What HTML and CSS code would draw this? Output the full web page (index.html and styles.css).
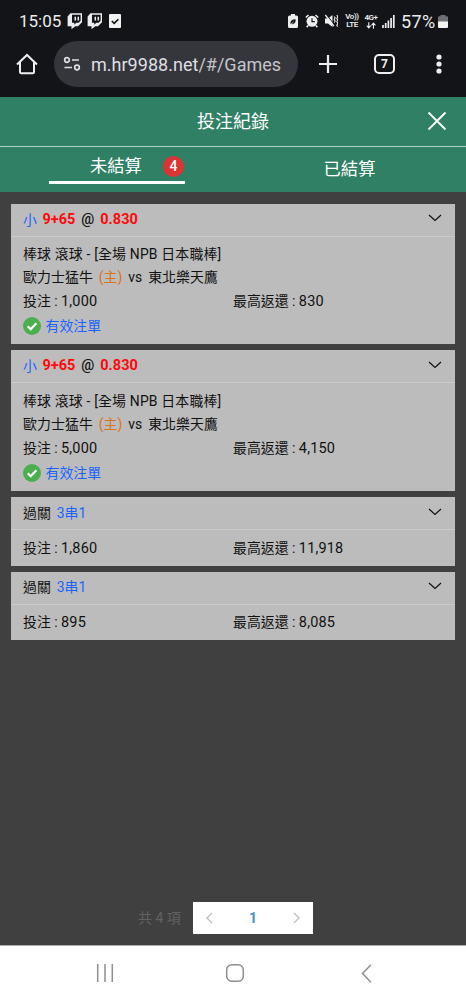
FILE: index.html
```html
<!DOCTYPE html>
<html lang="zh-Hant">
<head>
<meta charset="utf-8">
<title>投注紀錄</title>
<link rel="stylesheet" href="styles.css">
</head>
<body>
<svg width="0" height="0" class="defs">
  <symbol id="twitch" viewBox="0 0 16 16">
    <path fill="#ececee" fill-rule="evenodd" d="M3.500 .3H15v9L11 13.300H8.300L4.500 16.200v-2.900H.6V3.500zM5 1.700v8h2.300v2l2-2h2.400l1.900-1.900V1.700z"/>
    <path stroke="#ececee" stroke-width="1.500" d="M8.300 3.700v3.800M11.300 3.700v3.800"/>
  </symbol>
  <symbol id="chevron" viewBox="0 0 14 8">
    <path d="M1 1l6 5.500L13 1" fill="none" stroke="#111" stroke-width="1.200"/>
  </symbol>
  <symbol id="valid" viewBox="0 0 18 18">
    <circle cx="9" cy="9" r="9" fill="#4baf50"/>
    <path d="M4.700 9.300l3 2.900 5.700-6" fill="none" stroke="#fff" stroke-width="2.200"/>
  </symbol>
</svg>
<div class="screen">
  <div class="status">
    <span class="clock">15:05</span>
    <svg class="tw" width="16" height="16"><use href="#twitch"/></svg>
    <svg class="tw second" width="16" height="16"><use href="#twitch"/></svg>
    <svg class="task" width="12" height="14" viewBox="0 0 12 14"><rect width="12" height="14" rx="1" fill="#f2f2f3"/><path d="M2.800 7l2.400 2.400 4.200-4.200" fill="none" stroke="#121418" stroke-width="1.600"/></svg>
    <div class="status-right">
      <svg width="10" height="14" viewBox="0 0 10 14"><path fill="#eee" d="M3 0h4v1.500h1.500Q10 1.500 10 3v9.500Q10 14 8.500 14h-7Q0 14 0 12.500V3q0-1.500 1.500-1.500H3z"/><path d="M2.300 10.500C1.500 6.500 4 5 8 5c0 4-1.500 5.800-4.500 5zM2 11.200l3.500-3.400" fill="#17191d" stroke="#eee" stroke-width=".6"/></svg>
      <svg class="alarm" width="14" height="14" viewBox="0 0 14 14"><path d="M.8 3.500L3.500 1M13.200 3.500L10.500 1M3 11.500l-1.300 1.700M11 11.500l1.300 1.700" stroke="#eee" stroke-width="1.600"/><circle cx="7" cy="7.300" r="5.500" fill="#eee"/><path d="M7 4.200v3.500h2.800" fill="none" stroke="#17191d" stroke-width="1.200"/></svg>
      <svg class="mute" width="13" height="14" viewBox="0 0 13 14"><path fill="#eee" d="M0 4.500h3L7.500 1v12L3 9.500H0z"/><path d="M1.500 .7l8.500 10.600" stroke="#121418" stroke-width="1"/><path d="M.3 1l8.700 11.200" stroke="#eee" stroke-width="1.300"/><path d="M9.200 2.500l1 1.500-1 1.500 1 1.500-1 1.500M11.800 1l1 1.700-1 1.700 1 1.700-1 1.700 1 1.700-1 1.700 1 1.500" fill="none" stroke="#eee" stroke-width="1.100"/></svg>
      <span class="tiny volte"><span>Vo))</span><span>LTE</span></span>
      <span class="tiny fourg"><span>4G+</span><svg width="10" height="7" viewBox="0 0 9 6"><path d="M2.500 0v5M.7 3.200l1.800 2 1.800-2M6.700 6V1M4.900 2.800l1.800-2 1.800 2" fill="none" stroke="#eee"/></svg></span>
      <svg class="signal" width="13" height="13" viewBox="0 0 13 13"><path d="M1 13v-3M3.700 13V8M6.400 13V5.500M9.100 13V3M11.800 13V0" stroke="#eee" stroke-width="1.700"/></svg>
      <span class="percent">57%</span>
      <svg class="battery" width="10" height="13" viewBox="0 0 10 13"><path fill="#6f7073" d="M2.500 0h5v1.300H9q1 0 1 1V7H0V2.300q0-1 1-1h1.500z"/><path fill="#f2f2f2" d="M0 6.500h10V12q0 1-1 1H1q-1 0-1-1z"/></svg>
    </div>
  </div>

  <div class="browser">
    <svg class="home" width="22" height="22" viewBox="0 0 22 22"><path d="M4 9.500V19q0 1.200 1.200 1.200h11.600Q18 20.200 18 19V9.500M1 11.500L11 2l10 9.500" fill="none" stroke="#eeeef1" stroke-width="2"/></svg>
    <div class="address">
      <svg width="18" height="16" viewBox="0 0 18 16"><g fill="none" stroke="#dedee2" stroke-width="1.700"><circle cx="4" cy="4" r="2.300"/><path d="M9 4h7M1.500 11.500H9"/><circle cx="14" cy="11.500" r="2.300"/></g></svg>
      <span class="url">m.hr9988.net<span>/#/Games</span></span>
    </div>
    <svg class="plus" width="18" height="18" viewBox="0 0 18 18"><path d="M9 0v18M0 9h18" stroke="#eeeef1" stroke-width="2.200"/></svg>
    <div class="tabcount">7</div>
    <svg class="more" width="6" height="20" viewBox="0 0 6 20"><g fill="#eeeef1"><circle cx="3" cy="3" r="2.600"/><circle cx="3" cy="10" r="2.600"/><circle cx="3" cy="17" r="2.600"/></g></svg>
  </div>

  <header class="title">
    <h1>投注紀錄</h1>
    <svg width="20" height="20" viewBox="0 0 20 20"><path d="M1.500 1.500l17 17M18.500 1.500l-17 17" stroke="#fff" stroke-width="1.800"/></svg>
  </header>
  <nav class="tabs">
    <div class="tab active"><span>未結算</span><b class="badge">4</b></div>
    <div class="tab"><span>已結算</span></div>
  </nav>

  <main class="records">
    <article class="card">
      <div class="head"><p class="pick"><span>小</span><b>9+65</b><i>@</i><b>0.830</b></p><svg width="14" height="8"><use href="#chevron"/></svg></div>
      <div class="body">
        <p class="league">棒球 滾球 - [全場 NPB 日本職棒]</p>
        <p class="teams">歐力士猛牛 <em>(主)</em> vs 東北樂天鷹</p>
        <div class="stake"><span>投注 : <i>1,000</i></span><span>最高返還 : <i>830</i></span></div>
        <p class="state"><svg width="18" height="18"><use href="#valid"/></svg>有效注單</p>
      </div>
    </article>
    <article class="card">
      <div class="head"><p class="pick"><span>小</span><b>9+65</b><i>@</i><b>0.830</b></p><svg width="14" height="8"><use href="#chevron"/></svg></div>
      <div class="body">
        <p class="league">棒球 滾球 - [全場 NPB 日本職棒]</p>
        <p class="teams">歐力士猛牛 <em>(主)</em> vs 東北樂天鷹</p>
        <div class="stake"><span>投注 : <i>5,000</i></span><span>最高返還 : <i>4,150</i></span></div>
        <p class="state"><svg width="18" height="18"><use href="#valid"/></svg>有效注單</p>
      </div>
    </article>
    <article class="card parlay">
      <div class="head"><p class="pick">過關<span>3串1</span></p><svg width="14" height="8"><use href="#chevron"/></svg></div>
      <div class="body"><div class="stake"><span>投注 : <i>1,860</i></span><span>最高返還 : <i>11,918</i></span></div></div>
    </article>
    <article class="card parlay">
      <div class="head"><p class="pick">過關<span>3串1</span></p><svg width="14" height="8"><use href="#chevron"/></svg></div>
      <div class="body"><div class="stake"><span>投注 : <i>895</i></span><span>最高返還 : <i>8,085</i></span></div></div>
    </article>
  </main>

  <footer class="pager">
    <span class="total">共 4 項</span>
    <div class="pages">
      <svg width="7" height="12" viewBox="0 0 7 12"><path d="M6 1L1 6l5 5" fill="none" stroke="#bdbdbd" stroke-width="1.300"/></svg>
      <b>1</b>
      <svg width="7" height="12" viewBox="0 0 7 12"><path d="M1 1l5 5-5 5" fill="none" stroke="#bdbdbd" stroke-width="1.300"/></svg>
    </div>
  </footer>
  <div class="system">
    <svg width="18" height="18" viewBox="0 0 18 18"><path d="M1.700 0v18M9 0v18M16.300 0v18" stroke="#8e8e8e" stroke-width="1.500"/></svg>
    <svg class="homekey" width="20" height="20" viewBox="0 0 20 20"><rect x="1.700" y="1.700" width="16.600" height="16.600" rx="5" fill="none" stroke="#8e8e8e" stroke-width="1.500"/></svg>
    <svg class="back" width="11" height="19" viewBox="0 0 11 19"><path d="M10 .7L1.500 9.500l8.500 8.800" fill="none" stroke="#8e8e8e" stroke-width="1.500"/></svg>
  </div>
</div>
</body>
</html>
```
FILE: styles.css
```css
* { box-sizing: border-box; }
body { margin: 0; font-family: Roboto, "Noto Sans CJK TC", sans-serif; }
p, h1 { margin: 0; }
svg { display: block; flex: none; }
.defs { position: absolute; }
.screen { width: 466px; height: 1000px; display: flex; flex-direction: column; background: #404040; overflow: hidden; }

.status { height: 41px; flex: none; display: flex; align-items: center; padding: 1px 18px 0 19px; background: #121418; color: #ececee; white-space: nowrap; }
.clock { width: 42px; font-size: 17px; }
.tw { margin-left: 6px; }
.tw.second { margin-left: 4px; }
.task { margin-left: 6px; }
.status-right { margin-left: auto; display: flex; align-items: center; }
.alarm { margin-left: 7px; }
.mute { margin-left: 6px; }
.tiny { display: flex; flex-direction: column; align-items: center; font-size: 8px; line-height: 8px; font-weight: 600; letter-spacing: -.4px; }
.volte { width: 14px; margin-left: 7px; }
.fourg { width: 14px; margin-left: 5px; }
.signal { margin-left: 4px; }
.percent { width: 35.500px; margin-left: 6px; font-size: 18px; letter-spacing: .4px; }
.battery { margin-left: 1.500px; }

.browser { height: 56px; flex: none; display: flex; align-items: flex-start; padding-left: 16px; background: #121418; }
.home { margin-top: 12px; }
.address { width: 244px; height: 46px; margin-left: 16px; padding-left: 9px; border-radius: 23px; display: flex; align-items: center; background: #35363b; }
.url { margin-left: 10px; color: #dfdfe4; font-size: 18px; letter-spacing: .02px; white-space: nowrap; }
.url span { color: #c4c5cb; }
.plus { margin: 14px 0 0 21px; }
.tabcount { width: 21px; height: 20px; margin: 13px 0 0 37px; border: 2px solid #eeeef1; border-radius: 5px; color: #eeeef1; font-size: 12px; font-weight: 700; line-height: 16px; text-align: center; }
.more { margin: 13px 0 0 41px; }

.title { height: 50px; flex: none; display: flex; align-items: center; justify-content: space-between; padding: 0 19.500px 1px 197px; background: #2f8064; border-bottom: 1px solid #b4d1c7; color: #fff; }
h1 { padding-top: 2px; font-size: 18px; line-height: 26px; font-weight: 400; }
.tabs { height: 45px; flex: none; display: flex; background: #2f8064; color: #fff; font-size: 17.300px; }
.tab { width: 50%; display: flex; justify-content: center; align-items: center; padding-bottom: 1px; line-height: 26px; }
.tab.active { width: 135.500px; height: 37px; margin: 0 48.500px 0 49px; padding: 4px 0 0 41px; justify-content: flex-start; border-bottom: 3px solid #fff; }
.tab.active + .tab { width: 233px; }
.badge { width: 21px; height: 21px; margin: 0 0 0 21px; border-radius: 50%; background: #da3434; font-size: 14px; line-height: 21px; font-weight: 500; text-align: center; }

.records { padding: 11px 11px 0; margin-top: .5px; display: flex; flex-direction: column; gap: 6px; flex: 1; color: #111; font-size: 13.900px; }
.card { height: 140.900px; flex: none; background: #bcbcbc; }
.parlay { height: 68.500px; }
.head { height: 33px; display: flex; align-items: center; justify-content: space-between; padding: 0 13px 3px 12px; border-bottom: 1px solid #cbcbcb; }
.pick { display: flex; align-items: center; gap: 6px; padding-top: 3px; font-size: 14.500px; line-height: 24px; }
.pick span { margin-right: -.5px; color: #1a64ff; font-size: 13.900px; }
.pick b { color: #fe0a0a; font-weight: 700; }
.pick i { font-style: normal; font-weight: 500; }
.parlay .pick { padding-top: 2px; font-size: 13.900px; }
.body { padding: 5.300px 12px 0; }
.body p, .stake { height: 23.700px; line-height: 24px; white-space: nowrap; }
.league { letter-spacing: .18px; }
.body .teams { word-spacing: 2.300px; letter-spacing: .08px; line-height: 25px; }
.teams em { font-style: normal; color: #d9731c; }
.stake { display: flex; }
.stake span { width: 210px; }
.stake i { font-style: normal; font-size: 14.500px; letter-spacing: .15px; }
.body .state { display: flex; align-items: center; gap: 4.500px; height: 26px; color: #1a64ff; }

.pager { height: 43px; flex: none; display: flex; padding-left: 138px; align-items: flex-start; }
.total { width: 55px; line-height: 32px; font-size: 14px; color: #626262; white-space: nowrap; }
.pages { width: 120px; height: 32px; background: #fff; display: flex; align-items: center; justify-content: space-between; padding: 0 13px; }
.pages b { color: #3e91d1; font-size: 14px; }
.system { height: 55px; flex: none; display: flex; align-items: center; padding-left: 96px; background: #fff; border-top: 1px solid #aaa; }
.homekey { margin-left: 111px; }
.back { margin-left: 115.500px; }
```
